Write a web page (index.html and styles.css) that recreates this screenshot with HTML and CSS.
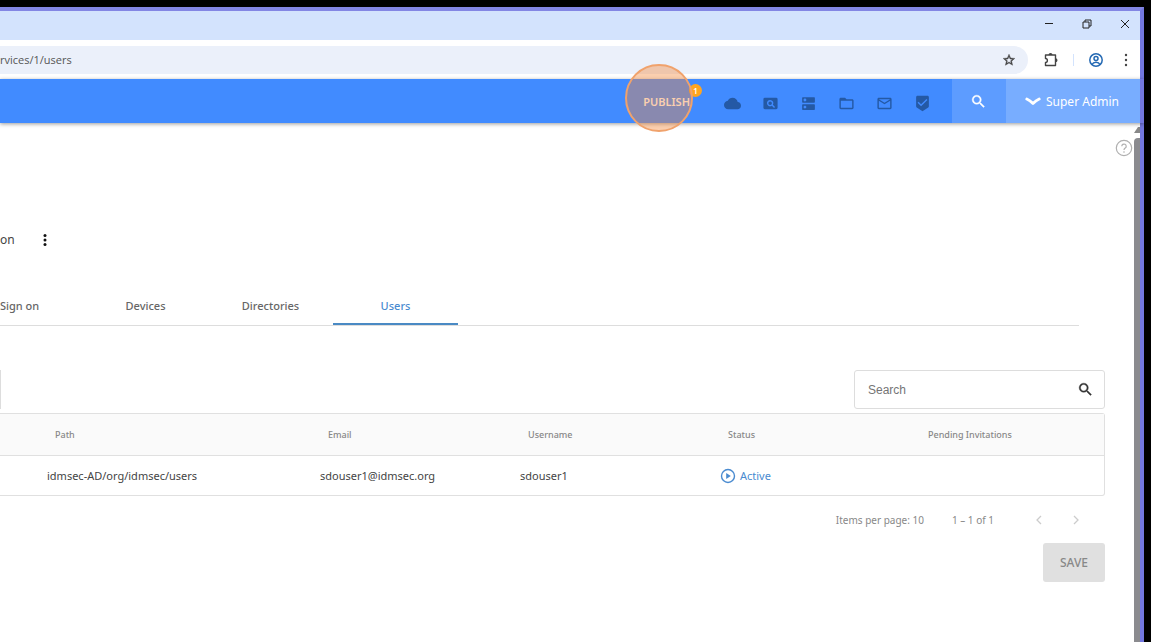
FILE: index.html
```
<!DOCTYPE html>
<html lang="en">
<head>
  <meta charset="UTF-8">
  <meta name="viewport" content="width=device-width, initial-scale=1.0">
  <title>Users</title>
  <link rel="stylesheet" href="styles.css">
</head>
<body>
  <div class="window">
    <div class="titlebar">
      <button class="icon-btn" aria-label="Minimize">
        <svg width="12" height="12" viewBox="0 0 12 12"><path d="M2 5.500h8" class="line"/></svg>
      </button>
      <button class="icon-btn" aria-label="Restore">
        <svg width="12" height="12" viewBox="0 0 12 12"><path d="M2 4h6v6H2zM4 4V2h6v6H8" class="line"/></svg>
      </button>
      <button class="icon-btn" aria-label="Close">
        <svg width="12" height="12" viewBox="0 0 12 12"><path d="M2 2l8 8M10 2l-8 8" class="line"/></svg>
      </button>
    </div>

    <div class="toolbar">
      <div class="address">
        <input type="text" class="url" value="rvices/1/users" aria-label="Address">
        <button class="icon-btn" aria-label="Bookmark">
          <svg width="14" height="14" viewBox="0 0 24 24"><path fill="#444" stroke="#444" stroke-width=".7" d="M22 9.24l-7.19-.62L12 2 9.19 8.63 2 9.24l5.46 4.73L5.82 21 12 17.27 18.18 21l-1.63-7.03L22 9.24zM12 15.4l-3.76 2.27 1-4.28-3.32-2.88 4.38-.38L12 6.1l1.71 4.04 4.38.38-3.32 2.88 1 4.28L12 15.4z"/></svg>
        </button>
      </div>
      <div class="browser-actions">
        <button class="icon-btn" aria-label="Extensions">
          <svg width="16" height="16" viewBox="0 0 16 16"><path fill="none" stroke="#444" stroke-width="1.400" stroke-linejoin="round" d="M2.500 3H12.500V13.500H2.500V10.500C5 10.500 5 6.500 2.500 6.500z"/><path fill="#444" d="M5.500 3a2 2 0 0 1 4 0zM12.500 6.200a2 2 0 0 1 0 4z"/></svg>
        </button>
        <span class="separator"></span>
        <button class="icon-btn" aria-label="Profile">
          <svg width="16" height="16" viewBox="0 0 16 16" fill="none" stroke="#2469b3" stroke-width="1.500"><circle cx="8" cy="8" r="6.200"/><circle cx="8" cy="6.500" r="2"/><path d="M4 12.500c1.500-3 6.500-3 8 0"/></svg>
        </button>
        <button class="icon-btn" aria-label="Browser menu">
          <svg width="16" height="16" viewBox="0 0 16 16" fill="#444"><circle cx="8" cy="3" r="1.200"/><circle cx="8" cy="8" r="1.200"/><circle cx="8" cy="13" r="1.200"/></svg>
        </button>
      </div>
    </div>

    <header class="app-header">
      <button class="publish">PUBLISH
        <span class="badge">1</span>
        <span class="highlight"></span>
      </button>
      <nav class="header-icons">
        <button class="icon-btn" aria-label="Cloud">
          <svg width="17" height="17" viewBox="0 0 24 24"><path d="M19.350 10.040C18.670 6.590 15.640 4 12 4 9.110 4 6.600 5.640 5.350 8.040 2.340 8.360 0 10.910 0 14c0 3.310 2.690 6 6 6h13c2.760 0 5-2.240 5-5 0-2.640-2.050-4.780-4.650-4.960z"/></svg>
        </button>
        <button class="icon-btn" aria-label="Reports">
          <svg width="17" height="17" viewBox="0 0 24 24"><path fill-rule="evenodd" d="M4 4h16a2 2 0 0 1 2 2v12a2 2 0 0 1-2 2H4a2 2 0 0 1-2-2V6a2 2 0 0 1 2-2zM11.500 7a4.500 4.500 0 1 0 2.400 8.300l3.100 3 1.400-1.400-3-3.100A4.500 4.500 0 0 0 11.500 7zm0 2a2.500 2.500 0 1 1 0 5 2.500 2.500 0 0 1 0-5z"/></svg>
        </button>
        <button class="icon-btn" aria-label="Servers">
          <svg width="17" height="17" viewBox="0 0 24 24"><path d="M20 13H4c-.55 0-1 .45-1 1v6c0 .55.45 1 1 1h16c.55 0 1-.45 1-1v-6c0-.55-.45-1-1-1zM7 19c-1.100 0-2-.9-2-2s.9-2 2-2 2 .9 2 2-.9 2-2 2zM20 3H4c-.55 0-1 .45-1 1v6c0 .55.45 1 1 1h16c.55 0 1-.45 1-1V4c0-.55-.45-1-1-1zM7 9c-1.100 0-2-.9-2-2s.9-2 2-2 2 .9 2 2-.9 2-2 2z"/></svg>
        </button>
        <button class="icon-btn" aria-label="Folders">
          <svg width="17" height="17" viewBox="0 0 24 24"><path d="M20 6h-8l-2-2H4c-1.100 0-1.990.9-1.990 2L2 18c0 1.100.9 2 2 2h16c1.100 0 2-.9 2-2V8c0-1.100-.9-2-2-2zm0 12H4V8h16v10z"/></svg>
        </button>
        <button class="icon-btn" aria-label="Mail">
          <svg width="17" height="17" viewBox="0 0 24 24"><path d="M20 4H4c-1.100 0-1.990.9-1.990 2L2 18c0 1.100.9 2 2 2h16c1.100 0 2-.9 2-2V6c0-1.100-.9-2-2-2zm0 14H4V8l8 5 8-5v10zm-8-7L4 6h16l-8 5z"/></svg>
        </button>
        <button class="icon-btn" aria-label="Approvals">
          <svg width="17" height="17" viewBox="0 0 24 24"><path d="M19 1H5c-1.100 0-1.990.9-1.990 2L3 15.930c0 .69.35 1.300.88 1.660L12 23l8.110-5.410c.53-.36.88-.97.88-1.660L21 3c0-1.100-.9-2-2-2zm-9 15l-5-5 1.410-1.410L10 13.170l7.590-7.590L19 7l-9 9z"/></svg>
        </button>
      </nav>
      <button class="header-search" aria-label="Search">
        <svg width="17" height="17" viewBox="0 0 24 24"><path fill="#fff" stroke="#fff" stroke-width=".5" d="M15.500 14h-.79l-.28-.27A6.470 6.470 0 0 0 16 9.500 6.500 6.500 0 1 0 9.500 16c1.610 0 3.090-.59 4.230-1.570l.27.28v.79l5 4.990L20.490 19l-4.990-5zm-6 0C7.010 14 5 11.990 5 9.500S7.010 5 9.500 5 14 7.010 14 9.500 11.990 14 9.500 14z"/></svg>
      </button>
      <button class="account">
        <svg width="16" height="10" viewBox="0 0 16 10"><path fill="none" stroke="#fff" stroke-width="2.800" stroke-linecap="round" stroke-linejoin="round" d="M1.800 3q3.200 1.500 6.200 4.500q3-3 6.200-4.500"/></svg>
        Super Admin
      </button>
    </header>

    <div class="page">
      <main class="content">
        <div class="help-row">
          <button class="icon-btn" aria-label="Help">
            <svg width="18" height="18" viewBox="0 0 18 18" fill="none" stroke="#b0b0b0" stroke-width="1.200"><circle cx="9" cy="9" r="7.700"/><path d="M6.800 7.300a2.200 2.200 0 1 1 3.400 1.800C9.300 9.700 9 10 9 11M9 12.300v1.400"/></svg>
          </button>
        </div>

        <div class="service">
          <span>on</span>
          <button class="icon-btn" aria-label="Service options">
            <svg width="16" height="16" viewBox="0 0 16 16" fill="#111"><circle cx="8" cy="3.500" r="1.500"/><circle cx="8" cy="8" r="1.500"/><circle cx="8" cy="12.500" r="1.500"/></svg>
          </button>
        </div>

        <nav class="tabs">
          <a href="#" class="tab tab-first">Sign on</a>
          <a href="#" class="tab">Devices</a>
          <a href="#" class="tab">Directories</a>
          <a href="#" class="tab active">Users</a>
        </nav>

        <section class="users">
          <div class="filters">
            <div class="filter-edge"></div>
            <div class="search-box">
              <input type="text" placeholder="Search" aria-label="Search users">
              <button class="icon-btn" aria-label="Run search">
                <svg width="17" height="17" viewBox="0 0 24 24"><path fill="#333" stroke="#333" stroke-width=".5" d="M15.500 14h-.79l-.28-.27A6.470 6.470 0 0 0 16 9.500 6.500 6.500 0 1 0 9.500 16c1.610 0 3.090-.59 4.230-1.570l.27.28v.79l5 4.990L20.490 19l-4.990-5zm-6 0C7.010 14 5 11.990 5 9.500S7.010 5 9.500 5 14 7.010 14 9.500 11.990 14 9.500 14z"/></svg>
              </button>
            </div>
          </div>

          <table class="user-table">
            <thead>
              <tr>
                <th class="col-path">Path</th>
                <th>Email</th>
                <th>Username</th>
                <th>Status</th>
                <th>Pending Invitations</th>
              </tr>
            </thead>
            <tbody>
              <tr>
                <td>idmsec-AD/org/idmsec/users</td>
                <td>sdouser1@idmsec.org</td>
                <td>sdouser1</td>
                <td>
                  <a href="#" class="status">
                    <svg width="16" height="16" viewBox="0 0 16 16"><circle cx="8" cy="8" r="6.500" fill="none" stroke="#4a8bd0" stroke-width="1.400"/><path fill="#4a8bd0" d="M6.200 5v6L10.800 8z"/></svg>
                    Active
                  </a>
                </td>
                <td></td>
              </tr>
            </tbody>
          </table>

          <div class="paginator">
            <span>Items per page: 10</span>
            <span>1 – 1 of 1</span>
            <div class="pager">
              <button class="icon-btn" aria-label="Previous page" disabled>
                <svg width="12" height="12" viewBox="0 0 12 12"><path fill="none" stroke="#ccc" stroke-width="1.300" d="M8 2L4 6l4 4"/></svg>
              </button>
              <button class="icon-btn" aria-label="Next page" disabled>
                <svg width="12" height="12" viewBox="0 0 12 12"><path fill="none" stroke="#ccc" stroke-width="1.300" d="M4 2l4 4-4 4"/></svg>
              </button>
            </div>
          </div>

          <div class="actions">
            <button class="save" disabled>SAVE</button>
          </div>
        </section>
      </main>

      <div class="scrollbar">
        <svg width="6" height="6" viewBox="0 0 6 6"><path fill="#888" d="M0 6l4-6 2 0v6z"/></svg>
        <div class="thumb"></div>
      </div>
    </div>
  </div>
</body>
</html>
```
FILE: styles.css
```
* {
  box-sizing: border-box;
}

body {
  margin: 0;
  background: #000;
  color: #444;
  font-family: "Noto Sans", sans-serif;
  font-size: 12px;
}

button {
  padding: 0;
  border: none;
  background: none;
  font-family: inherit;
  cursor: pointer;
}

a {
  text-decoration: none;
}

svg {
  display: block;
}

.window {
  display: flex;
  flex-direction: column;
  height: 100vh;
  border-top: 7px solid #000;
  border-right: 7px solid #000;
  background: #fff;
}

.titlebar,
.toolbar,
.app-header,
.page {
  border-right: 4px solid #7377df;
}

/* browser chrome */
.titlebar {
  display: flex;
  justify-content: flex-end;
  align-items: center;
  gap: 26px;
  height: 33px;
  padding: 0 9px 4px 0;
  border-top: 4px solid #8386e4;
  background: #d3e3fd;
}

.line {
  fill: none;
  stroke: #222;
  stroke-width: 1;
}

.toolbar {
  display: flex;
  align-items: center;
  height: 39px;
  padding-right: 6px;
}

.address {
  display: flex;
  flex: 1;
  align-items: center;
  height: 28px;
  padding-right: 12px;
  border-radius: 0 14px 14px 0;
  background: #ebf0fa;
}

.url {
  flex: 1;
  padding: 0;
  border: none;
  background: none;
  color: #555;
  font-family: "Open Sans", sans-serif;
  font-size: 11px;
}

.browser-actions {
  display: flex;
  align-items: center;
  gap: 14px;
  padding-left: 15px;
}

.separator {
  width: 1px;
  height: 12px;
  background: #d3e3fd;
}

/* application header */
.app-header {
  display: flex;
  position: relative;
  justify-content: flex-end;
  height: 44px;
  background: #418bff;
  box-shadow: 0 1px 4px rgba(0, 0, 0, 0.4);
}

.publish {
  position: relative;
  margin-right: 34px;
  color: #fff;
  font-size: 11px;
  font-weight: 600;
}

.badge {
  position: absolute;
  top: 5px;
  right: -12px;
  width: 13px;
  height: 13px;
  border-radius: 50%;
  background: #ffa51f;
  color: #fff;
  font-size: 8px;
  line-height: 13px;
}

/* click marker over the publish button */
.highlight {
  position: absolute;
  top: -15px;
  left: -18px;
  width: 68px;
  height: 68px;
  border: 2px solid #f0a26c;
  border-radius: 50%;
  background: rgba(244, 135, 54, 0.4);
}

.header-icons {
  display: flex;
  align-items: center;
  gap: 21px;
  padding-top: 5px;
  padding-right: 21px;
}

.header-icons svg {
  fill: #2459a5;
}

.header-search {
  display: flex;
  align-items: center;
  justify-content: center;
  width: 54px;
  background: #5d9cff;
}

.account {
  display: flex;
  align-items: center;
  gap: 5px;
  padding: 0 21px 0 19px;
  background: #78adff;
  color: #fff;
  font-size: 12px;
}

/* page */
.page {
  display: flex;
  flex: 1;
}

.content {
  flex: 1;
}

.help-row {
  display: flex;
  justify-content: flex-end;
  padding: 16px 1px 0 0;
}

.service {
  display: flex;
  align-items: center;
  gap: 22px;
  margin-top: 74px;
  font-size: 12px;
}

.tabs {
  display: flex;
  margin: 38px 55px 0 0;
  border-bottom: 1px solid #ddd;
}

.tab {
  width: 125px;
  height: 39px;
  border-bottom: 2px solid transparent;
  color: #666;
  font-size: 11px;
  font-weight: 500;
  line-height: 40px;
  text-align: center;
}

.tab-first {
  width: 83px;
  text-align: left;
}

.tab.active {
  border-bottom-color: #4a8ac4;
  color: #4a8bd0;
}

.users {
  margin: 44px 29px 0 0;
}

.filters {
  display: flex;
  justify-content: space-between;
}

.filter-edge {
  width: 1px;
  background: #ddd;
}

.search-box {
  display: flex;
  align-items: center;
  width: 251px;
  height: 39px;
  padding: 0 10px 0 13px;
  border: 1px solid #ddd;
  border-radius: 3px;
}

.search-box input {
  flex: 1;
  min-width: 0;
  padding: 0;
  border: none;
  font-family: "Liberation Sans", sans-serif;
  font-size: 12px;
}

.search-box input::placeholder {
  color: #757575;
}

.user-table {
  width: 100%;
  margin-top: 4px;
  border: 1px solid #e0e0e0;
  border-left: none;
  border-radius: 0 3px 3px 0;
  border-spacing: 0;
  table-layout: fixed;
}

.user-table th {
  width: 200px;
  height: 42px;
  padding: 0 0 0 8px;
  border-bottom: 1px solid #e0e0e0;
  background: #fafafa;
  color: #888;
  font-size: 9px;
  font-weight: 500;
  text-align: left;
}

.user-table th:last-child {
  width: 184px;
}

.user-table .col-path {
  width: auto;
  padding-left: 55px;
}

.user-table td {
  height: 39px;
  padding: 0;
  font-size: 11px;
}

.user-table td:first-child {
  padding-left: 47px;
}

.status {
  display: flex;
  align-items: center;
  gap: 4px;
  color: #4a8bd0;
}

.paginator {
  display: flex;
  justify-content: flex-end;
  align-items: center;
  gap: 28px;
  height: 47px;
  padding-right: 23px;
  color: #888;
  font-size: 10px;
}

.pager {
  display: flex;
  gap: 25px;
  padding-left: 11px;
}

.actions {
  display: flex;
  justify-content: flex-end;
}

.save {
  width: 62px;
  height: 39px;
  border-radius: 3px;
  background: #e0e0e0;
  color: #888;
  font-size: 12px;
  font-weight: 500;
}

.scrollbar {
  display: flex;
  flex-direction: column;
  gap: 5px;
  width: 6px;
  padding-top: 4px;
}

.thumb {
  flex: 1;
  border-radius: 4px 0 0 0;
  background: #8b8b8f;
}
```
